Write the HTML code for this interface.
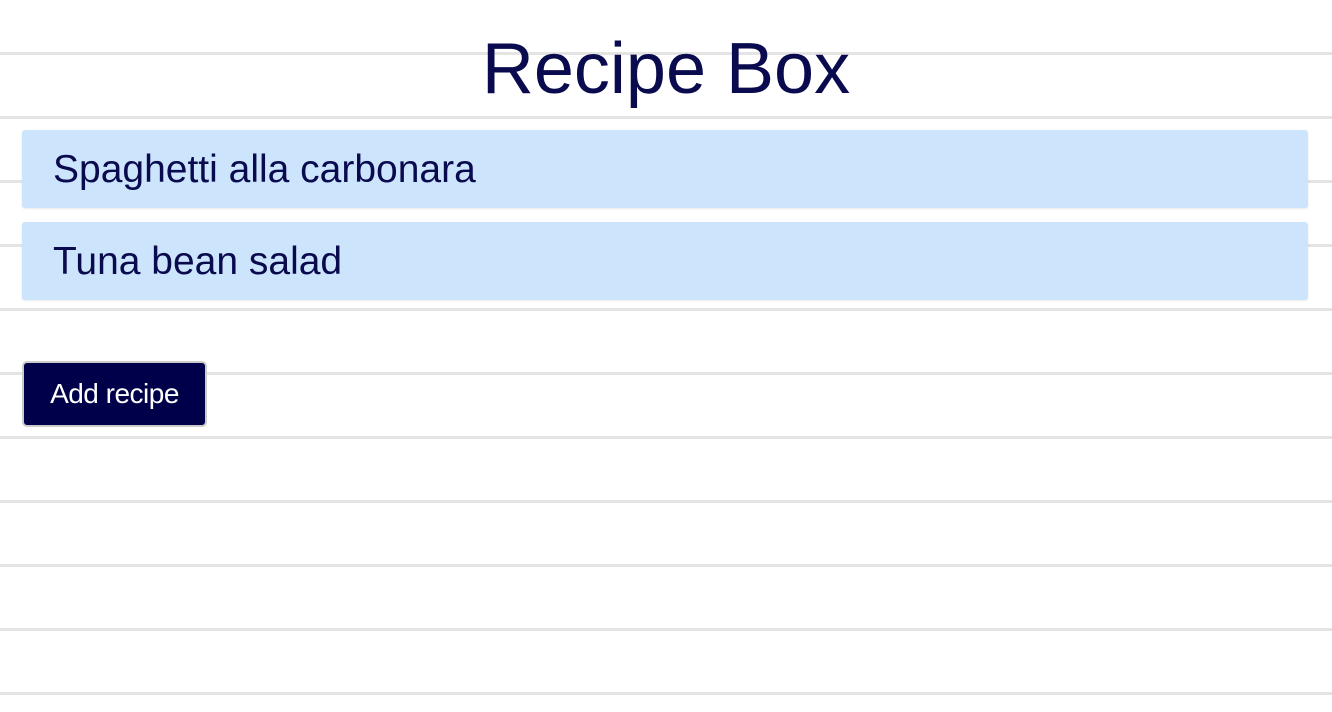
<!DOCTYPE html>
<html><head><meta charset="utf-8"><style>
html,body{margin:0;padding:0;width:1332px;height:712px;overflow:hidden;background:#fff;position:relative;font-family:"Liberation Sans",sans-serif}
.l{position:absolute;left:0;width:1332px;height:3px;background:#e4e4e4}
h1{position:absolute;left:0;width:1332px;top:24px;margin:0;text-align:center;font-size:72px;font-weight:normal;color:#0a0a4e;line-height:90px}
.c{position:absolute;left:22px;width:1286px;height:78px;background:#cce4fc;border-radius:3px;box-shadow:0 1px 2px rgba(0,0,0,.08);color:#0a0a4e;font-size:39px;line-height:80px;padding-left:31px;box-sizing:border-box}
.b{position:absolute;left:22px;top:361px;width:185px;height:66px;background:#00004a;border:2px solid #ccc;border-radius:5px;box-sizing:border-box;color:#fff;font-size:28px;line-height:62px;text-align:center;letter-spacing:-0.5px}
</style></head><body>
<div class="l" style="top:52px"></div><div class="l" style="top:116px"></div><div class="l" style="top:180px"></div><div class="l" style="top:244px"></div><div class="l" style="top:308px"></div><div class="l" style="top:372px"></div><div class="l" style="top:436px"></div><div class="l" style="top:500px"></div><div class="l" style="top:564px"></div><div class="l" style="top:628px"></div><div class="l" style="top:692px"></div>
<h1>Recipe Box</h1>
<div class="c" style="top:130px">Spaghetti alla carbonara</div>
<div class="c" style="top:222px">Tuna bean salad</div>
<div class="b">Add recipe</div>
</body></html>
